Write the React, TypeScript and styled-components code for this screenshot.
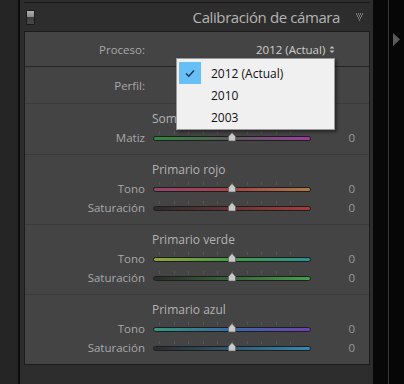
import React from "react";
import styled, { createGlobalStyle } from "styled-components";

const Global = createGlobalStyle`
  html, body { margin: 0; padding: 0; background: #000; }
  body { font-family: "Open Sans", "Noto Sans", sans-serif; }
`;

const Screen = styled.div`
  display: flex;
  width: 404px;
  height: 384px;
  overflow: hidden;
`;

const LeftGutter = styled.div`
  width: 18px;
  background: #252525;
`;

const Divider = styled.div<{ $w: number; $c: string }>`
  width: ${(p) => p.$w}px;
  background: ${(p) => p.$c};
`;

const Panel = styled.div`
  width: 353px;
  background: #2d2d2d;
  display: flex;
  flex-direction: column;
  padding: 0 3px 0 4px;
  box-sizing: border-box;
`;

const PrevEdge = styled.div`
  margin-top: 2px;
  height: 1px;
  background: #1a1a1a;
`;

const Header = styled.div`
  height: 28px;
  display: flex;
  align-items: center;
  padding: 0 6px 0 2px;
`;

const Toggle = styled.div`
  width: 7px;
  height: 13px;
  border: 1px solid #1b1b1b;
  background: linear-gradient(#b0b0b0 0%, #8a8a8a 46%, #3c3c3c 50%, #4a4a4a 100%);
  border-radius: 1px;
`;

const Title = styled.div`
  flex: 1;
  text-align: right;
  font-size: 15px;
  color: #b4b4b4;
  padding-right: 16px;
  letter-spacing: -0.4px;
`;

const Box = styled.div`
  position: relative;
  border: 1px solid #1c1c1c;
  background: #444444;
  height: 334px;
  box-sizing: border-box;
`;

const TopRow = styled.div<{ $h: number; $line: string }>`
  height: ${(p) => p.$h}px;
  display: flex;
  align-items: center;
  border-bottom: 1px solid ${(p) => p.$line};
`;

const Label = styled.div`
  width: 120px;
  text-align: right;
  font-size: 11.5px;
  color: #a8a8a8;
  flex-shrink: 0;
`;

const PopupValue = styled.div`
  margin-left: 111px;
  font-size: 11.5px;
  color: #cfcfcf;
  display: flex;
  align-items: center;
  gap: 4px;
`;

const Group = styled.div<{ $last?: boolean }>`
  padding: 5px 0 7px;
  border-bottom: ${(p) => (p.$last ? "none" : "1px solid #3a3a3a")};
`;

const Heading = styled.div`
  height: 19px;
  display: flex;
  align-items: center;
  padding-left: 127px;
  font-size: 12px;
  color: #b3b3b3;
`;

const SliderRow = styled.div`
  height: 19px;
  display: grid;
  grid-template-columns: 120px 158px 1fr;
  column-gap: 8px;
  align-items: center;
  padding-right: 14px;
`;

const Value = styled.div`
  text-align: right;
  font-size: 11.5px;
  color: #9a9a9a;
`;

const TrackWrap = styled.div`
  position: relative;
  height: 19px;
`;

const Ticks = styled.div`
  position: absolute;
  left: 6px;
  right: 6px;
  top: 3px;
  height: 3px;
  background: repeating-linear-gradient(
    to right,
    #555555 0,
    #555555 1px,
    transparent 1px,
    transparent 14.6px
  );
`;

const Track = styled.div<{ $bg: string }>`
  position: absolute;
  left: 0;
  right: 0;
  top: 8px;
  height: 3px;
  border: 1px solid #1e1e1e;
  border-radius: 3px;
  background: ${(p) => p.$bg};
`;

const Thumb = styled.svg`
  position: absolute;
  left: 74px;
  top: 4px;
`;

const Menu = styled.div`
  position: absolute;
  left: 151px;
  top: 26px;
  width: 159px;
  height: 72px;
  box-sizing: border-box;
  background: #f0f0f0;
  border: 1px solid #9a9a9a;
  box-shadow: 2px 2px 3px rgba(0, 0, 0, 0.45);
  padding: 3px 2px;
  font-size: 12px;
  color: #111;
`;

const MenuItem = styled.div`
  height: 22px;
  display: flex;
  align-items: center;
`;

const CheckCell = styled.div<{ $on?: boolean }>`
  width: 22px;
  height: 22px;
  margin-right: 10px;
  background: ${(p) => (p.$on ? "#66bff5" : "transparent")};
  display: flex;
  align-items: center;
  justify-content: center;
`;

const RightStrip = styled.div`
  flex: 1;
  background: #060606;
  display: flex;
  align-items: flex-start;
  padding: 33px 0 0 4px;
`;

const SliderThumb = () => (
  <Thumb width="10" height="10" viewBox="0 0 10 10">
    <path d="M5 0.5 L8.5 4.5 L8.5 9 L1.5 9 L1.5 4.5 Z" fill="#c8c8c8" stroke="#555" strokeWidth="0.6" />
  </Thumb>
);

type S = { label: string; bg: string };

const Slider = ({ label, bg }: S) => (
  <SliderRow>
    <Label>{label}</Label>
    <TrackWrap>
      <Ticks />
      <Track $bg={bg} />
      <SliderThumb />
    </TrackWrap>
    <Value>0</Value>
  </SliderRow>
);

const groups: { title: string; sliders: S[] }[] = [
  {
    title: "Primario rojo",
    sliders: [
      { label: "Tono", bg: "linear-gradient(to right, #98426e, #a44444 50%, #ae7a46)" },
      { label: "Saturación", bg: "linear-gradient(to right, #2c2c2c, #a83c3c)" },
    ],
  },
  {
    title: "Primario verde",
    sliders: [
      { label: "Tono", bg: "linear-gradient(to right, #94a23a, #449a48 50%, #2a9292)" },
      { label: "Saturación", bg: "linear-gradient(to right, #2c2c2c, #44a048)" },
    ],
  },
  {
    title: "Primario azul",
    sliders: [
      { label: "Tono", bg: "linear-gradient(to right, #32987a, #3a68a8 50%, #6e42b0)" },
      { label: "Saturación", bg: "linear-gradient(to right, #2c2c2c, #3488b4)" },
    ],
  },
];

export default function App() {
  return (
    <Screen>
      <Global />
      <LeftGutter />
      <Divider $w={2} $c="#0c0c0c" />
      <Panel>
        <PrevEdge />
        <Header>
          <Toggle />
          <Title>Calibración de cámara</Title>
          <svg width="8" height="8" viewBox="0 0 8 8">
            {[
              [0.5, 1], [2.5, 1], [4.5, 1], [6.5, 1],
              [1.5, 3], [3.5, 3], [5.5, 3],
              [2.5, 5], [4.5, 5],
              [3.5, 7],
            ].map(([x, y], i) => (
              <rect key={i} x={x - 0.5} y={y - 0.5} width="1" height="1" fill="#c8c8c8" />
            ))}
          </svg>
        </Header>
        <Box>
          <TopRow $h={34} $line="#262626">
            <Label>Proceso:</Label>
            <PopupValue>
              2012 (Actual)
              <svg width="6" height="9" viewBox="0 0 6 9">
                <path d="M0.5 3.5 L3 1 L5.5 3.5 Z M0.5 5.5 L3 8 L5.5 5.5 Z" fill="#bdbdbd" />
              </svg>
            </PopupValue>
          </TopRow>
          <TopRow $h={36} $line="#3a3a3a">
            <Label>Perfil:</Label>
          </TopRow>
          <Group>
            <Heading>Sombras</Heading>
            <Slider label="Matiz" bg="linear-gradient(to right, #2e8a3c, #5a5a5a 50%, #a03ca0)" />
          </Group>
          {groups.map((g, i) => (
            <Group key={g.title} $last={i === groups.length - 1}>
              <Heading>{g.title}</Heading>
              {g.sliders.map((s) => (
                <Slider key={s.label} {...s} />
              ))}
            </Group>
          ))}
          <Menu>
            <MenuItem>
              <CheckCell $on>
                <svg width="10" height="9" viewBox="0 0 10 9">
                  <path d="M1 4.5 L3.8 7.3 L9 1.5" fill="none" stroke="#1a3550" strokeWidth="1.4" />
                </svg>
              </CheckCell>
              2012 (Actual)
            </MenuItem>
            <MenuItem>
              <CheckCell />
              2010
            </MenuItem>
            <MenuItem>
              <CheckCell />
              2003
            </MenuItem>
          </Menu>
        </Box>
      </Panel>
      <Divider $w={15} $c="#080808" />
      <Divider $w={1} $c="#353535" />
      <RightStrip>
        <svg width="7" height="13" viewBox="0 0 7 13">
          <path d="M0 0 L7 6.5 L0 13 Z" fill="#5a5a5a" />
        </svg>
      </RightStrip>
    </Screen>
  );
}
